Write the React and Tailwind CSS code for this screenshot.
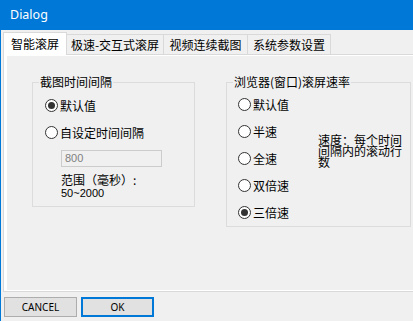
import React from 'react';

const cjk = { fontFamily: '"Noto Sans CJK SC", "Noto Sans", sans-serif' };

function Radio({ label, checked }) {
  return (
    <div className="flex items-center h-[27px] gap-[2px]">
      <span className="w-[13px] h-[13px] rounded-full border border-[#333333] bg-white flex items-center justify-center">
        {checked && <span className="w-[7px] h-[7px] rounded-full bg-[#333333]" />}
      </span>
      <span className="text-[12px] leading-[14px] text-black">{label}</span>
    </div>
  );
}

function GroupBox({ title, className, children }) {
  return (
    <div className={`relative border border-[#dcdcdc] ${className}`}>
      <span className="absolute left-[6px] top-[-8px] px-[1px] bg-[#f0f0f0] text-[12px] leading-[14px] text-black">
        {title}
      </span>
      {children}
    </div>
  );
}

function Tab({ label, active, width }) {
  if (active) {
    return (
      <div className={`${width} h-[23px] -mb-px relative z-10 bg-white border border-b-0 border-[#d9d9d9] flex items-center justify-center text-[12px] text-black`}>
        {label}
      </div>
    );
  }
  return (
    <div className={`${width} h-[20px] -ml-px bg-[#f0f0f0] border border-b-0 border-[#d9d9d9] flex items-center justify-center text-[12px] text-black`}>
      {label}
    </div>
  );
}

export default function App() {
  return (
    <div className="w-[413px] h-[321px] overflow-hidden bg-[#f0f0f0] border-l border-[#0078d7]" style={cjk}>
      {/* Title bar */}
      <div className="h-[30px] bg-[#0078d7] flex items-center pl-[9px] text-white text-[12.5px]" style={{ fontFamily: '"Noto Sans", sans-serif' }}>
        Dialog
      </div>

      {/* Tabs */}
      <div className="h-[24px] flex items-end pl-[2px]">
        <Tab label="智能滚屏" active width="w-[64px]" />
        <Tab label="极速-交互式滚屏" width="w-[98px]" />
        <Tab label="视频连续截图" width="w-[85px]" />
        <Tab label="系统参数设置" width="w-[84px]" />
      </div>

      {/* Tab pane */}
      <div className="ml-[2px] w-[440px] h-[238px] border border-[#d9d9d9] bg-white pl-[3px] pt-[1px] pb-[1px]">
        <div className="h-full bg-[#f0f0f0] pl-[25px] pt-[26px] flex items-start gap-[31px]">
          <GroupBox title="截图时间间隔" className="w-[163px] h-[125px] pl-[12px] pt-[9px]">
            <Radio label="默认值" checked />
            <Radio label="自设定时间间隔" />
            <div className="ml-[16px] mt-[4px] w-[101px] h-[17px] border border-[#cccccc] bg-[#f0f0f0] flex items-center pl-[3px] text-[11px] text-[#808080]" style={{ fontFamily: '"Liberation Sans", sans-serif' }}>
              800
            </div>
            <div className="ml-[16px] mt-[6px] text-black">
              <div className="text-[12px] leading-[14px]">范围（毫秒）:</div>
              <div className="text-[11px] leading-[12px]" style={{ fontFamily: '"Liberation Sans", sans-serif' }}>50~2000</div>
            </div>
          </GroupBox>

          <GroupBox title="浏览器(窗口)滚屏速率" className="w-[185px] h-[145px] pl-[11px] pt-[8px] flex items-start">
            <div className="w-[80px] flex flex-col">
              <Radio label="默认值" />
              <Radio label="半速" />
              <Radio label="全速" />
              <Radio label="双倍速" />
              <Radio label="三倍速" checked />
            </div>
            <div className="w-[86px] mt-[43px] text-[12px] leading-[11px] text-black">
              速度：每个时间间隔内的滚动行数
            </div>
          </GroupBox>
        </div>
      </div>

      {/* Buttons */}
      <div className="flex gap-[4px] pl-[3px] mt-[5px]" style={{ fontFamily: '"Noto Sans", sans-serif' }}>
        <button className="w-[73px] h-[20px] bg-[#e1e1e1] border border-[#adadad] text-[10px] text-black flex items-center justify-center">
          CANCEL
        </button>
        <button className="w-[73px] h-[20px] bg-[#e1e1e1] border-2 border-[#0078d7] text-[10px] text-black flex items-center justify-center">
          OK
        </button>
      </div>
    </div>
  );
}
